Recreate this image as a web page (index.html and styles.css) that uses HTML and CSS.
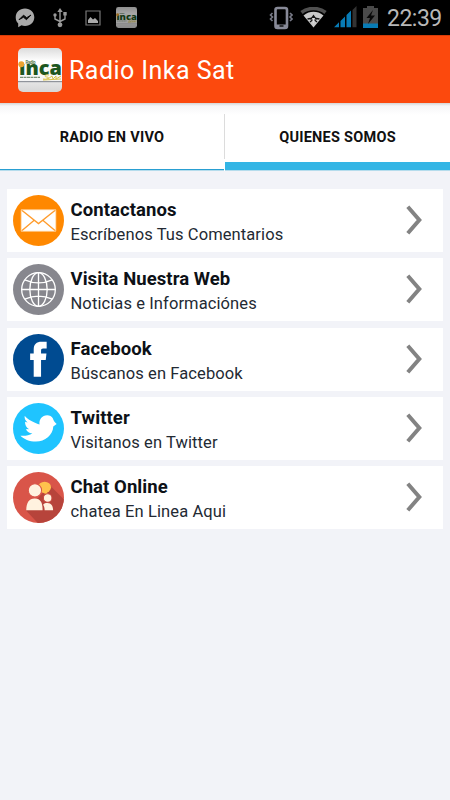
FILE: index.html
```html
<!DOCTYPE html>
<html lang="es">
<head>
<meta charset="utf-8">
<title>Radio Inka Sat</title>
<link rel="stylesheet" href="styles.css">
</head>
<body>
<svg class="defs" width="0" height="0" aria-hidden="true">
  <defs>
    <linearGradient id="tile" x1="0" y1="0" x2="0" y2="1">
      <stop offset="0" stop-color="#dcdcdc"/><stop offset=".3" stop-color="#fff"/><stop offset=".74" stop-color="#f4f4f4"/><stop offset=".76" stop-color="#8c9098"/><stop offset=".79" stop-color="#e4e4e4"/><stop offset="1" stop-color="#d6d6d6"/>
    </linearGradient>
    <symbol id="inca" viewBox="0 0 44 44">
      <rect width="44" height="44" rx="5" fill="url(#tile)"/>
      <text x="7.500" y="15.500" font-family="Roboto, sans-serif" font-size="4.500" font-weight="700" fill="#5d8058" textLength="10">Radio</text>
      <text x="1" y="27" font-family="Open Sans, sans-serif" font-size="19.500" font-weight="800" fill="#1d571f" textLength="43" lengthAdjust="spacingAndGlyphs">ınca</text>
      <circle cx="3.300" cy="16.300" r="3" fill="#eda32f"/>
      <path d="M2 29.300h20" stroke="#789077" stroke-width="1.300" stroke-dasharray="3 .5"/>
      <path d="M31 27c-5-1-5 2-2 2s1 3-4 2M30 31l4-3 1 3 3-3 0 3 5-3M25 32l18-1" fill="none" stroke="#d9c34b" stroke-width="1"/>
    </symbol>
  </defs>
</svg>
<header>
  <div class="status">
    <div class="notices">
      <svg class="messenger" width="20" height="20" viewBox="0 0 20 20"><path d="M10 .5C4.600.5.7 4.300.7 9.200c0 2.800 1 4.800 2.500 6.200v3.900l3.300-2c1 .4 2.200.6 3.500.6 5.400 0 9.300-3.800 9.300-8.700S15.400.5 10 .5z" fill="#a9a9a9"/><path d="M4 11.700l4.500-4.500 3.200 2.500L16 7l-4.500 4.700-3-2.500z" fill="#080808" stroke="#080808"/></svg>
      <svg class="usb" width="14" height="20" viewBox="0 0 14 20"><g fill="none" stroke="#999" stroke-width="1.400"><path d="M7 17V3M7 13.500L2 11V7M7 13.500l5-2.500V5"/></g><g fill="#999"><path d="M7 0l2.700 4H4.300z"/><circle cx="7" cy="16.800" r="2.400"/><circle cx="2" cy="7" r="1.700"/><path d="M10.300 4h3.400v3.400h-3.400z"/></g></svg>
      <svg class="photo" width="16" height="16" viewBox="0 0 16 16"><path d="M1 1h14v14H1z" fill="none" stroke="#777" stroke-width="1.200"/><path d="M3 13v-3l2.500-3L8 9.500l2-1.500 3 3v2z" fill="#aaa"/></svg>
      <svg class="mini" width="21" height="21"><use href="#inca"/></svg>
    </div>
    <div class="system">
      <svg class="vibrate" width="24" height="24" viewBox="0 0 24 24"><rect x="6.500" y="2" width="11.500" height="20" rx="2" fill="none" stroke="#888a98" stroke-width="2.600"/><path d="M6.500 18.500H18v4H6.500z" fill="#888a98"/><path d="M10.500 20h4" stroke="#111" stroke-width="1.500"/><path d="M3.500 7l-2 2 2 2-2 2 2 2M21 7l2 2-2 2 2 2-2 2" fill="none" stroke="#777986" stroke-width="1.600"/></svg>
      <svg class="wifi" width="27" height="21" viewBox="0 0 27 21"><path d="M1.500 5.500C8 .2 19 .2 25.500 5.500" fill="none" stroke="#505050" stroke-width="3.600"/><path d="M3.500 8.500C7 5.800 10 4.800 13.500 4.800s6.500 1 10 3.700l-10 12z" fill="#c9c9c9"/><path d="M13.500 6v5M13.500 7.500l-3.500 5h7z" fill="#151515"/><path d="M7.500 12l6-1 6 1M10 15l3.500-3 3.500 3" fill="none" stroke="#151515" stroke-width="1.300"/><path d="M12 11h3l-1.500 6z" fill="#ddd"/></svg>
      <svg class="signal" width="23" height="22" viewBox="0 0 23 22"><path d="M0 21.300l5-5v5zM6.500 15l4.500-4.500v10.800H6.500zM12.500 9L17 4.500v16.800h-4.500z" fill="#087bb5"/><path d="M18.500 4L22.500 0v21.300h-4z" fill="#333"/></svg>
      <svg class="battery" width="15" height="23" viewBox="0 0 15 23"><path d="M4 0h7v2h4v20H0V2h4z" fill="#4a4a4a"/><path d="M0 17.500h15v4.500H0z" fill="#087bb5"/><path d="M10 4L3.500 12H7l-2 6 7-8.500H8z" fill="#080808"/></svg>
      <span class="clock">22:39</span>
    </div>
  </div>
  <div class="appbar">
    <svg class="logo" width="44" height="44"><use href="#inca"/></svg>
    <h1>Radio Inka Sat</h1>
  </div>
</header>
<nav>
  <a class="tab live"><span>RADIO EN VIVO</span></a>
  <i class="divider"></i>
  <a class="tab about"><span>QUIENES SOMOS</span></a>
</nav>
<main>
  <section class="row">
    <svg class="icon" viewBox="0 0 50 50"><circle cx="25" cy="25" r="25" fill="#ff8800"/><path d="M8 14.500h34v21H8z" fill="#fff"/><path d="M8 14.500l17 13.500 17-13.500M8 35.500L20.500 25M42 35.500L29.500 25" fill="none" stroke="#ff9c2d" stroke-width="1.300"/><path d="M8 14.500h34v21H8z" fill="none" stroke="#ffd6a4" stroke-width=".7"/></svg>
    <div class="copy"><h2>Contactanos</h2><p>Escríbenos Tus Comentarios</p></div>
    <svg class="chevron" viewBox="0 0 16 30"><path d="M1.800 1.800L13.300 15 1.800 28.200"/></svg>
  </section>
  <section class="row">
    <svg class="icon" viewBox="0 0 50 50"><circle cx="25" cy="25" r="25" fill="#87878e"/><g fill="none" stroke="#fff" stroke-width="1.300"><circle cx="25" cy="25" r="16.500"/><ellipse cx="25" cy="25" rx="8.500" ry="16.500"/><path d="M25 8.500v33M8.500 25h33M11.500 15.500q13.500 6 27 0M11.500 34.500q13.500-6 27 0"/></g></svg>
    <div class="copy"><h2>Visita Nuestra Web</h2><p>Noticias e Informaciónes</p></div>
    <svg class="chevron" viewBox="0 0 16 30"><path d="M1.800 1.800L13.300 15 1.800 28.200"/></svg>
  </section>
  <section class="row">
    <svg class="icon" viewBox="0 0 50 50"><circle cx="25" cy="25" r="25" fill="#004b91"/><path d="M20.300 42V25.500h-3.500V19h3.500v-3.500C20.300 10 23 7.700 28 7.700h5v6.600h-3.500c-1.500 0-2 .8-2 2V19h5.300l-.7 6.500h-4.600V42z" fill="#fff"/></svg>
    <div class="copy"><h2>Facebook</h2><p>Búscanos en Facebook</p></div>
    <svg class="chevron" viewBox="0 0 16 30"><path d="M1.800 1.800L13.300 15 1.800 28.200"/></svg>
  </section>
  <section class="row">
    <svg class="icon" viewBox="0 0 50 50"><circle cx="25" cy="25" r="25" fill="#1fc4ff"/><path d="M11.500 12.500c3 4 8.500 6.500 14.500 8.500-.8-4.500 2.500-9 7.500-9 2.500 0 4.500 1.200 5.500 3 .8 2 1.500 3.800 3.800 5.500L39.500 23c-.5 8.500-8 14.800-17 14.800-6.500 0-12-2.600-15.200-5.800 4 .5 8.500-.2 11.700-2.200-3.500-.3-5.500-2-6.200-4.300l3 .2c-3-1.700-4-4.300-4-7.300l2.500.6c-2.500-1.900-3.200-4.200-2.800-6.500z" fill="#fff"/></svg>
    <div class="copy"><h2>Twitter</h2><p>Visitanos en Twitter</p></div>
    <svg class="chevron" viewBox="0 0 16 30"><path d="M1.800 1.800L13.300 15 1.800 28.200"/></svg>
  </section>
  <section class="row">
    <svg class="icon" viewBox="0 0 50 50"><clipPath id="disc"><circle cx="25" cy="25" r="25"/></clipPath><g clip-path="url(#disc)"><path d="M0 0h50v50H0z" fill="#d95549"/><path d="M36 13L54 31v24H29L13 38z" fill="#b7443b"/></g><ellipse cx="31" cy="15" rx="6.300" ry="5.500" fill="#ffc14d"/><path d="M33 19l2 4-6-3z" fill="#ffc14d"/><g fill="#fff2df"><circle cx="21.500" cy="18" r="6.500" stroke="#d95549"/><path d="M13 37.500c0-7 2.500-11.500 8.300-11.500S29 30 29 37.500z"/><circle cx="34" cy="25.500" r="4.200" stroke="#c94a40"/><path d="M31 37.500c0-2.500-.5-4-1.500-5.500 1-1.300 2.300-1.700 4.300-1.700 3.800 0 5.500 3 5.500 7.200z"/></g></svg>
    <div class="copy"><h2>Chat Online</h2><p>chatea En Linea Aqui</p></div>
    <svg class="chevron" viewBox="0 0 16 30"><path d="M1.800 1.800L13.300 15 1.800 28.200"/></svg>
  </section>
</main>
</body>
</html>
```
FILE: styles.css
```css
* { box-sizing: border-box; }
body { margin: 0; width: 450px; height: 800px; overflow: hidden; background: #f2f3f8; font-family: Roboto, sans-serif; color: #0d1117; }
h1, h2, p { margin: 0; white-space: nowrap; }
.defs { position: absolute; }
svg { display: block; flex: none; }
.status { height: 35px; display: flex; justify-content: space-between; background: #000; }
.notices { display: flex; align-items: flex-start; padding-left: 15px; }
.messenger { margin-top: 8px; }
.usb { margin: 8px 0 0 18px; }
.photo { margin: 10px 0 0 18px; }
.mini { margin: 7px 0 0 15px; opacity: .65; }
.system { display: flex; align-items: flex-start; padding-right: 7px; }
.vibrate { margin-top: 6px; }
.wifi { margin: 7px 0 0 7px; }
.signal { margin: 6px 0 0 7px; }
.battery { margin: 6px 0 0 6px; }
.clock { margin-left: 9px; width: 56px; font-size: 23px; line-height: 38px; color: #b8b8b8; letter-spacing: -.5px; }
.appbar { height: 68px; padding: 0 18px; display: flex; align-items: center; gap: 7px; background: #fc490d; border-top: 1px solid #d63b08; }
h1 { font-size: 25px; font-weight: 400; line-height: 30px; color: #fff; letter-spacing: .45px; padding-top: 2px; }
nav { height: 68px; display: grid; grid-template-columns: 224px 1px 1fr; padding-bottom: 1px; background: linear-gradient(#d5d5d5, #f6f6f8 3px, #fff 12px); }
.tab { display: flex; align-items: center; justify-content: center; font-size: 14.5px; font-weight: 700; color: #101010; letter-spacing: .25px; }
.live { border-bottom: 1px solid #299fd2; box-shadow: 0 1px #b5dcec; padding-top: 3px; }
.divider { margin-top: 11px; height: 45px; background: #dcdcdc; }
.about { border-bottom: 8px solid #33b5e5; box-shadow: 0 1px #b5dcec; padding-top: 10px; }
.tab span { line-height: 20px; }
main { padding: 18px 7px 0; display: flex; flex-direction: column; gap: 6.3px; }
.row { height: 63px; padding: 0 21px 0 6px; display: flex; align-items: center; background: #fff; }
.icon { width: 51px; height: 51px; }
.copy { flex: 1; margin-left: 6.5px; padding-top: 4px; }
h2 { font-size: 18.5px; line-height: 25px; font-weight: 700; letter-spacing: .07px; }
p { font-size: 16.5px; line-height: 24px; color: #232a33; letter-spacing: .1px; }
.chevron { width: 16px; height: 30px; margin-bottom: 1px; }
.chevron path { fill: none; stroke: #838383; stroke-width: 4; }
```
